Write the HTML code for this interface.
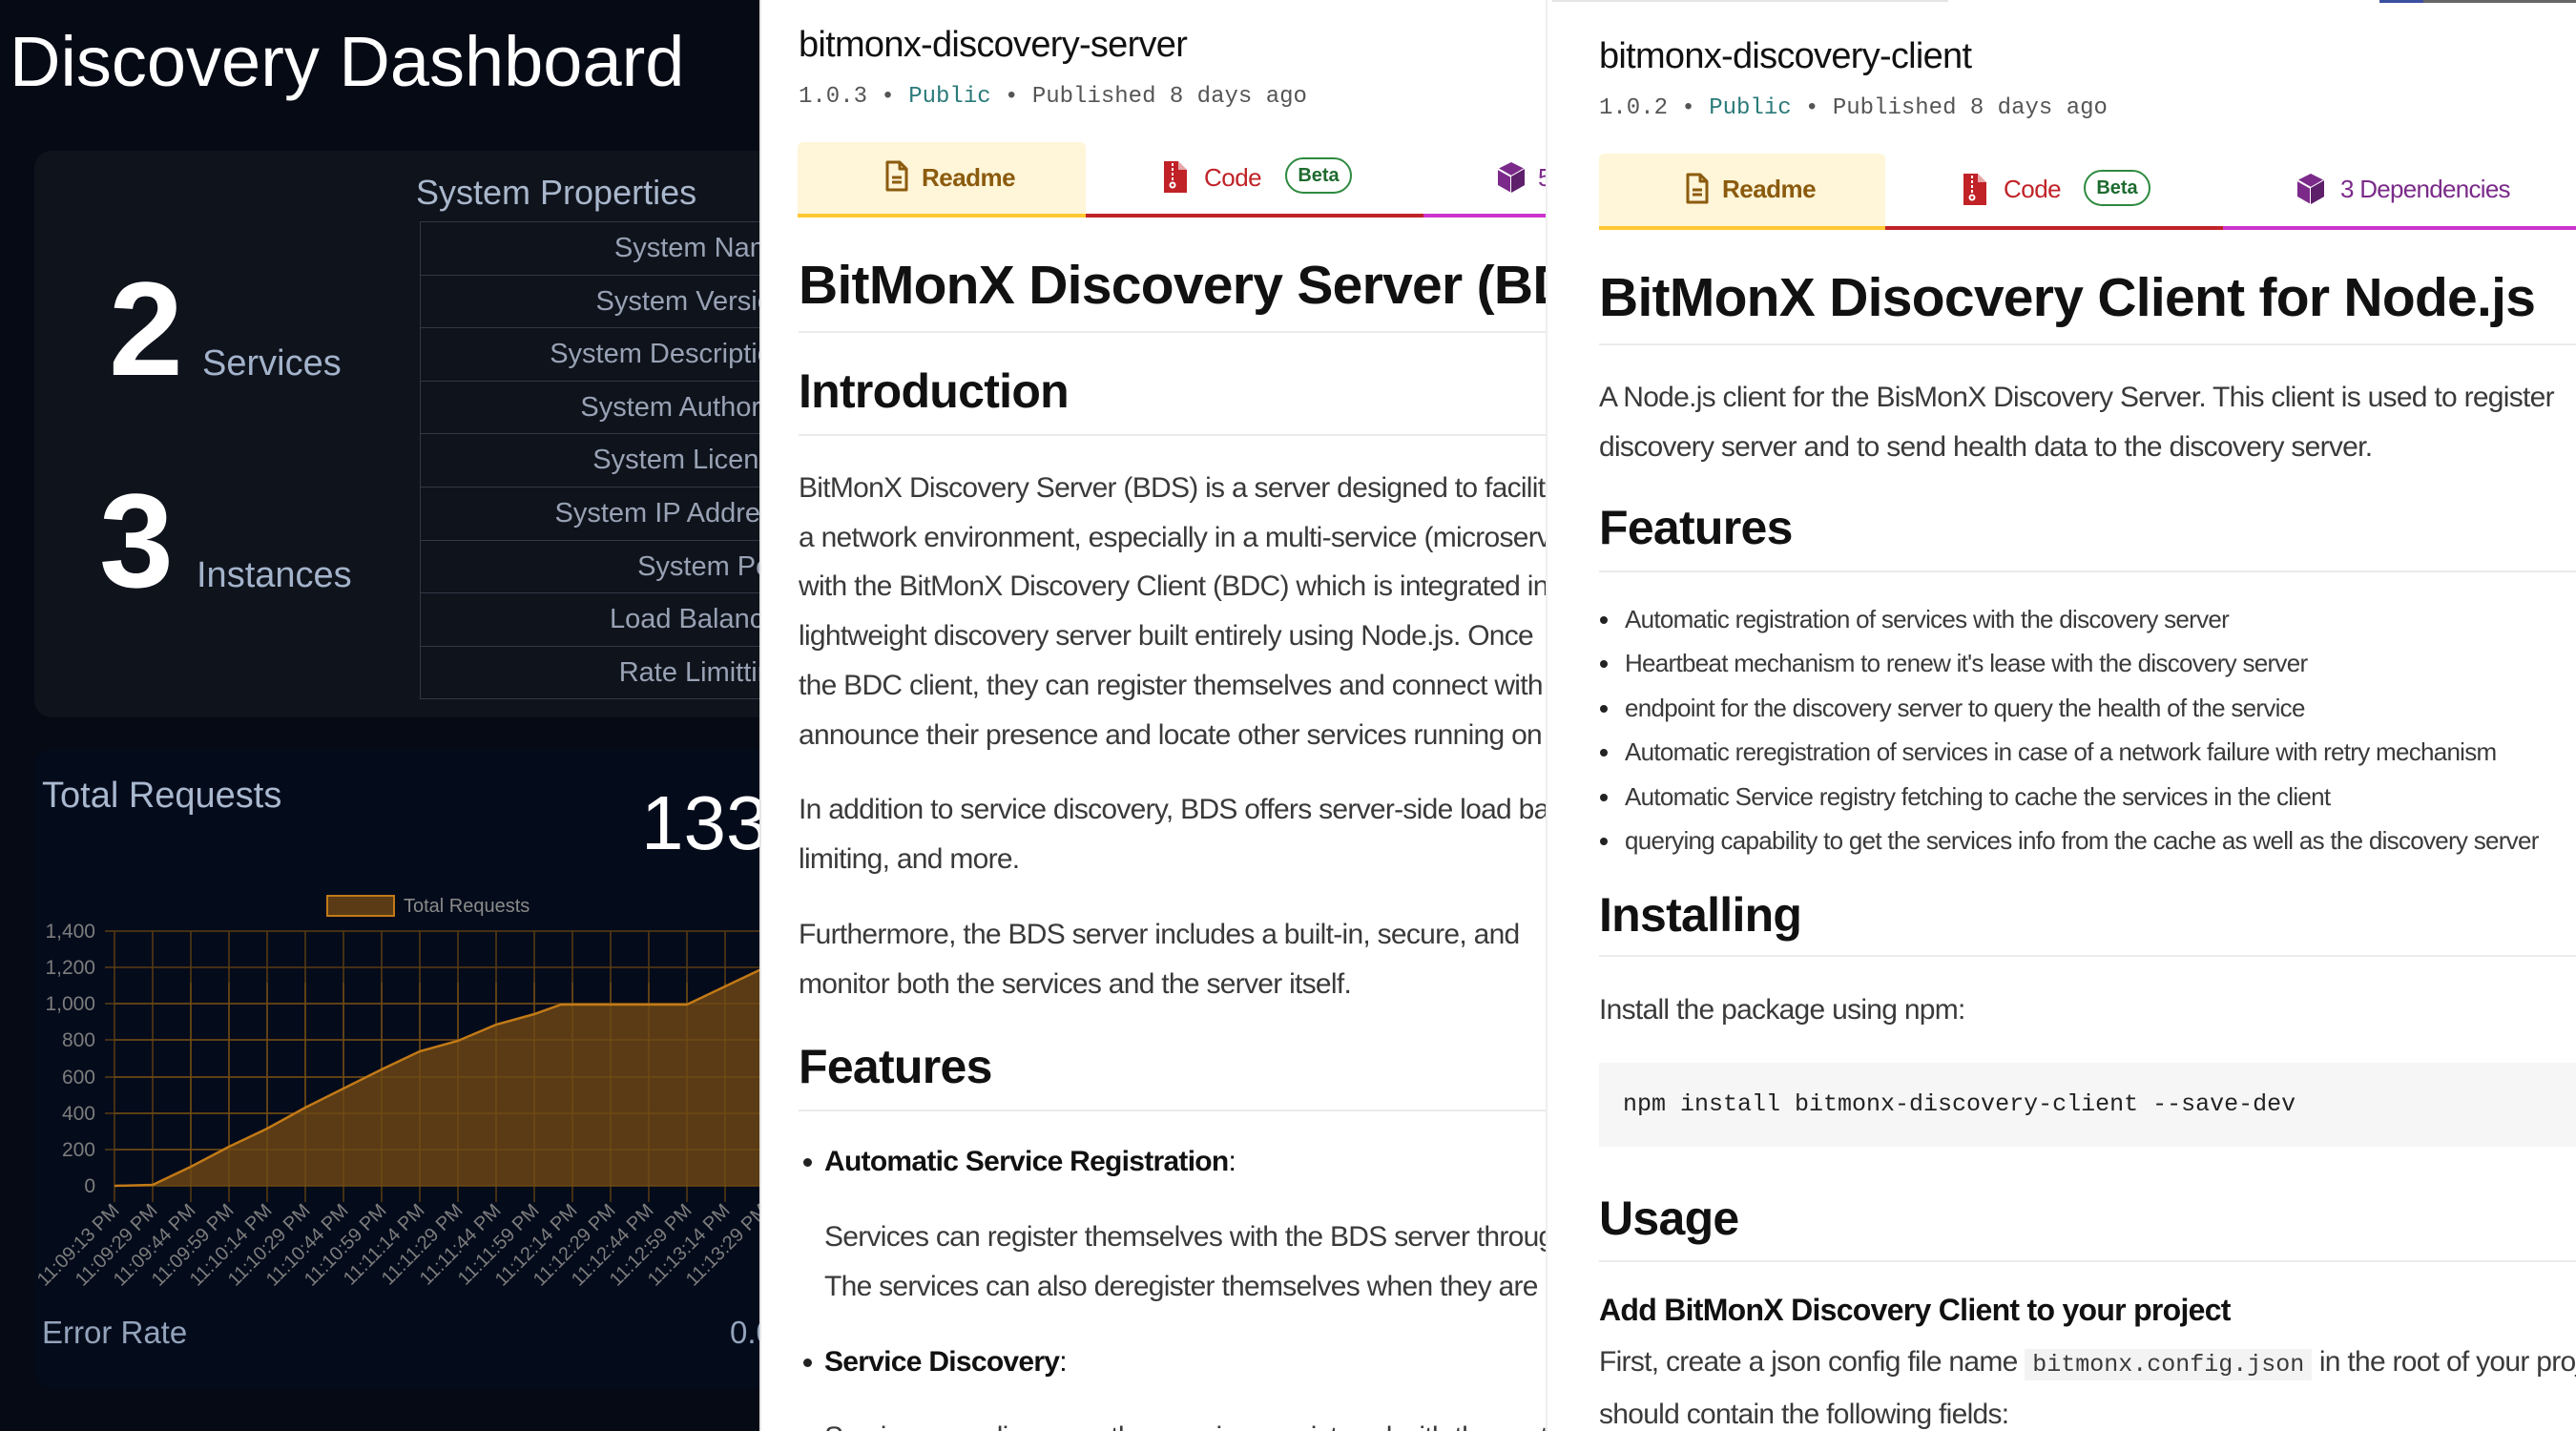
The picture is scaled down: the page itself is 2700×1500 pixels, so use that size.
<!DOCTYPE html>
<html><head><meta charset="utf-8"><style>
*{margin:0;padding:0;box-sizing:border-box}
body{width:2700px;height:1500px;position:relative;overflow:hidden;background:#fff;font-family:"Liberation Sans",sans-serif}
.p{position:absolute;top:0;height:1500px;overflow:hidden}
.a{position:absolute;white-space:nowrap}
.mono{font-family:"Liberation Mono",monospace}
.doc{font-family:"Liberation Sans",sans-serif;letter-spacing:-0.045em;color:#333}
.h1{font-size:57px;font-weight:bold;color:#111;line-height:57px}
.h2{font-size:50px;font-weight:bold;color:#111;line-height:50px}
.rule{position:absolute;height:2px;background:#ebebeb}
.para{font-size:30px;line-height:51.7px;color:#3a3a3a}
.row{position:absolute;left:440px;width:400px;height:56px;border-left:1px solid #333845;border-top:1px solid #333845;color:#98a2b4;font-size:29px;line-height:54px;text-align:right;padding-right:14px}
</style></head><body>

<!-- LEFT DASHBOARD -->
<div class="p" style="left:0;width:796px;background:#060a15">
  <div class="a" style="left:10px;top:28px;font-size:74px;line-height:74px;color:#fff">Discovery Dashboard</div>
  <div class="a" style="left:36px;top:158px;width:800px;height:594px;background:#0f131c;border-radius:18px"></div>
  <div class="a" style="left:436px;top:184px;font-size:36px;line-height:36px;color:#a9b7cc">System Properties</div>
  <div class="row" style="top:232px">System Name</div>
  <div class="row" style="top:288px">System Version</div>
  <div class="row" style="top:343px">System Description</div>
  <div class="row" style="top:399px">System Authority</div>
  <div class="row" style="top:454px">System License</div>
  <div class="row" style="top:510px">System IP Address</div>
  <div class="row" style="top:566px">System Port</div>
  <div class="row" style="top:621px">Load Balancer</div>
  <div class="row" style="top:677px;border-bottom:1px solid #333845">Rate Limitting</div>
  <div class="a" style="left:114px;top:275px;font-size:140px;line-height:140px;font-weight:bold;color:#fff">2</div>
  <div class="a" style="left:212px;top:362px;font-size:38px;line-height:38px;color:#a3b3cb">Services</div>
  <div class="a" style="left:104px;top:497px;font-size:140px;line-height:140px;font-weight:bold;color:#fff">3</div>
  <div class="a" style="left:206px;top:584px;font-size:38px;line-height:38px;color:#a3b3cb">Instances</div>

  <div class="a" style="left:36px;top:785px;width:800px;height:670px;background:#040b1b;border-radius:18px"></div>
  <div class="a" style="left:44px;top:815px;font-size:38px;line-height:38px;color:#a9b8cf">Total Requests</div>
  <div class="a" style="left:672px;top:823px;font-size:80px;line-height:80px;color:#fff">133</div>
  <div class="a" style="left:44px;top:1380px;font-size:33px;line-height:33px;color:#93a3bb">Error Rate</div>
  <div class="a" style="left:765px;top:1380px;font-size:33px;line-height:33px;color:#93a3bb">0.0</div>

  <svg class="a" style="left:0;top:0" width="796" height="1500" viewBox="0 0 796 1500">
    <rect x="343" y="939" width="70" height="21" fill="#5a3b15" stroke="#c27a17" stroke-width="2"/>
    <text x="423" y="956" font-size="20" fill="#8a8a8a" font-family="Liberation Sans">Total Requests</text>
    <g stroke="#5a3d12" stroke-width="1.5">
      <line x1="110" y1="976" x2="800" y2="976"/><line x1="110" y1="1014" x2="800" y2="1014"/>
      <line x1="110" y1="1052" x2="800" y2="1052"/><line x1="110" y1="1090" x2="800" y2="1090"/>
      <line x1="110" y1="1129" x2="800" y2="1129"/><line x1="110" y1="1167" x2="800" y2="1167"/>
      <line x1="110" y1="1205" x2="800" y2="1205"/>
      <g id="vl">
      <line x1="120" y1="976" x2="120" y2="1260"/><line x1="160" y1="976" x2="160" y2="1260"/>
      <line x1="200" y1="976" x2="200" y2="1260"/><line x1="240" y1="976" x2="240" y2="1260"/>
      <line x1="280" y1="976" x2="280" y2="1260"/><line x1="320" y1="976" x2="320" y2="1260"/>
      <line x1="360" y1="976" x2="360" y2="1260"/><line x1="400" y1="976" x2="400" y2="1260"/>
      <line x1="440" y1="976" x2="440" y2="1260"/><line x1="480" y1="976" x2="480" y2="1260"/>
      <line x1="520" y1="976" x2="520" y2="1260"/><line x1="560" y1="976" x2="560" y2="1260"/>
      <line x1="600" y1="976" x2="600" y2="1260"/><line x1="640" y1="976" x2="640" y2="1260"/>
      <line x1="680" y1="976" x2="680" y2="1260"/><line x1="720" y1="976" x2="720" y2="1260"/>
      <line x1="760" y1="976" x2="760" y2="1260"/>
      </g>
    </g>
    <path d="M120,1243 L160,1242 L200,1223 L240,1202 L280,1183 L320,1161 L360,1141 L400,1121 L440,1102 L480,1091 L520,1074 L560,1063 L588,1053 L720,1053 L760,1034 L800,1015 L800,1243 Z" fill="#5a3b15"/>
    <g stroke="#6e4a15" stroke-width="1.5">
      <line x1="120" y1="1243" x2="800" y2="1243"/>
      <line x1="120" y1="1205" x2="800" y2="1205"/><line x1="120" y1="1167" x2="800" y2="1167"/>
      <line x1="120" y1="1129" x2="800" y2="1129"/><line x1="120" y1="1090" x2="800" y2="1090"/>
      <line x1="120" y1="1052" x2="800" y2="1052"/>
      <line x1="200" y1="1030" x2="200" y2="1243"/><line x1="240" y1="1030" x2="240" y2="1243"/>
      <line x1="280" y1="1030" x2="280" y2="1243"/><line x1="320" y1="1030" x2="320" y2="1243"/>
      <line x1="360" y1="1030" x2="360" y2="1243"/><line x1="400" y1="1030" x2="400" y2="1243"/>
      <line x1="440" y1="1030" x2="440" y2="1243"/><line x1="480" y1="1030" x2="480" y2="1243"/>
      <line x1="520" y1="1030" x2="520" y2="1243"/><line x1="560" y1="1030" x2="560" y2="1243"/>
      <line x1="600" y1="1030" x2="600" y2="1243"/><line x1="640" y1="1030" x2="640" y2="1243"/>
      <line x1="680" y1="1030" x2="680" y2="1243"/><line x1="720" y1="1030" x2="720" y2="1243"/>
      <line x1="760" y1="1030" x2="760" y2="1243"/>
    </g>
    <path d="M120,1243 L160,1242 L200,1223 L240,1202 L280,1183 L320,1161 L360,1141 L400,1121 L440,1102 L480,1091 L520,1074 L560,1063 L588,1053 L720,1053 L760,1034 L800,1015" fill="none" stroke="#c27a17" stroke-width="2.5"/>
    <g font-family="Liberation Sans" font-size="21" fill="#7d7d7d" text-anchor="end">
      <text x="100" y="983">1,400</text><text x="100" y="1021">1,200</text><text x="100" y="1059">1,000</text>
      <text x="100" y="1097">800</text><text x="100" y="1136">600</text><text x="100" y="1174">400</text>
      <text x="100" y="1212">200</text><text x="100" y="1250">0</text>
    </g>
    <g font-family="Liberation Sans" font-size="20" fill="#7d7d7d" text-anchor="end">
      <text transform="translate(126,1270) rotate(-45)">11:09:13 PM</text>
      <text transform="translate(166,1270) rotate(-45)">11:09:29 PM</text>
      <text transform="translate(206,1270) rotate(-45)">11:09:44 PM</text>
      <text transform="translate(246,1270) rotate(-45)">11:09:59 PM</text>
      <text transform="translate(286,1270) rotate(-45)">11:10:14 PM</text>
      <text transform="translate(326,1270) rotate(-45)">11:10:29 PM</text>
      <text transform="translate(366,1270) rotate(-45)">11:10:44 PM</text>
      <text transform="translate(406,1270) rotate(-45)">11:10:59 PM</text>
      <text transform="translate(446,1270) rotate(-45)">11:11:14 PM</text>
      <text transform="translate(486,1270) rotate(-45)">11:11:29 PM</text>
      <text transform="translate(526,1270) rotate(-45)">11:11:44 PM</text>
      <text transform="translate(566,1270) rotate(-45)">11:11:59 PM</text>
      <text transform="translate(606,1270) rotate(-45)">11:12:14 PM</text>
      <text transform="translate(646,1270) rotate(-45)">11:12:29 PM</text>
      <text transform="translate(686,1270) rotate(-45)">11:12:44 PM</text>
      <text transform="translate(726,1270) rotate(-45)">11:12:59 PM</text>
      <text transform="translate(766,1270) rotate(-45)">11:13:14 PM</text>
      <text transform="translate(806,1270) rotate(-45)">11:13:29 PM</text>
    </g>
  </svg>
</div>

<!-- MIDDLE: server -->
<div class="p doc" style="left:796px;width:826px;background:#fff;border-left:2px solid #e6e6e6;border-right:2px solid #eee">
  <div class="a" style="left:39px;top:28px;font-size:38px;line-height:38px;color:#111">bitmonx-discovery-server</div>
  <div class="a mono" style="left:39px;top:90px;font-size:24px;line-height:24px;letter-spacing:0;color:#555">1.0.3 • <span style="color:#2b7a7a">Public</span> • Published 8 days ago</div>
  <div class="a" style="left:38px;top:149px;width:302px;height:75px;background:#fff5d8;border-radius:6px 6px 0 0"></div>
  <div class="a" style="left:38px;top:224px;width:302px;height:4px;background:#ffc832"></div>
  <div class="a" style="left:340px;top:224px;width:354px;height:4px;background:#c02227"></div>
  <div class="a" style="left:694px;top:224px;width:140px;height:4px;background:#cc33cc"></div>
  <svg class="a" style="left:129px;top:168px" width="26" height="34" viewBox="0 0 26 34"><path d="M3 2h13l7 7v22H3z M16 2v7h7" fill="none" stroke="#8b5b0e" stroke-width="3" stroke-linejoin="round"/><path d="M8 18h10M8 23h10" stroke="#8b5b0e" stroke-width="3"/></svg>
  <div class="a" style="left:168px;top:173px;font-size:26px;line-height:26px;color:#8b5b0e;font-weight:bold;letter-spacing:-0.02em">Readme</div>
  <svg class="a" style="left:421px;top:168px" width="26" height="34" viewBox="0 0 26 34"><path d="M1 1h15l9 9v24H1z" fill="#c02227"/><path d="M16 1v9h9" fill="#fff" opacity=".6"/><path d="M10 3v3M10 8v3M10 13v3M10 18v3" stroke="#fff" stroke-width="2"/><circle cx="10" cy="26" r="2.5" fill="none" stroke="#fff" stroke-width="2"/></svg>
  <div class="a" style="left:464px;top:173px;font-size:26px;line-height:26px;color:#c02227;letter-spacing:-0.02em">Code</div>
  <div class="a" style="left:549px;top:165px;width:70px;height:38px;border:2px solid #2d8a3f;border-radius:19px;color:#1f6b2f;font-size:20px;line-height:34px;text-align:center;font-weight:bold;letter-spacing:0">Beta</div>
  <svg class="a" style="left:770px;top:169px" width="32" height="34" viewBox="0 0 32 34"><path d="M16 1l14 7v17l-14 8-14-8V8z" fill="#7b2a8a"/><path d="M2 8l14 8 14-8M16 16v17" stroke="#fff" stroke-width="2" fill="none"/><path d="M16 16l14-8v17l-14 8z" fill="#5e1f6b"/></svg>
  <div class="a" style="left:814px;top:173px;font-size:26px;line-height:26px;color:#7b2a8a">5</div>

  <div class="a h1" style="left:39px;top:271px">BitMonX Discovery Server (BDS)</div>
  <div class="rule" style="left:39px;top:347px;width:792px"></div>
  <div class="a h2" style="left:39px;top:385px">Introduction</div>
  <div class="rule" style="left:39px;top:455px;width:792px"></div>
  <div class="a para" style="left:39px;top:486px">BitMonX Discovery Server (BDS) is a server designed to facilitate<br>a network environment, especially in a multi-service (microservice)<br>with the BitMonX Discovery Client (BDC) which is integrated into a<br>lightweight discovery server built entirely using Node.js. Once<br>the BDC client, they can register themselves and connect with<br>announce their presence and locate other services running on</div>
  <div class="a para" style="left:39px;top:823px">In addition to service discovery, BDS offers server-side load balancing,<br>limiting, and more.</div>
  <div class="a para" style="left:39px;top:954px">Furthermore, the BDS server includes a built-in, secure, and<br>monitor both the services and the server itself.</div>
  <div class="a h2" style="left:39px;top:1093px">Features</div>
  <div class="rule" style="left:39px;top:1163px;width:792px"></div>
  <div class="a" style="left:44px;top:1214px;width:9px;height:9px;border-radius:50%;background:#222"></div>
  <div class="a para" style="left:66px;top:1192px;color:#111"><b>Automatic Service Registration</b>:</div>
  <div class="a para" style="left:66px;top:1271px">Services can register themselves with the BDS server through<br>The services can also deregister themselves when they are</div>
  <div class="a" style="left:44px;top:1424px;width:9px;height:9px;border-radius:50%;background:#222"></div>
  <div class="a para" style="left:66px;top:1402px;color:#111"><b>Service Discovery</b>:</div>
  <div class="a para" style="left:66px;top:1481px">Services can discover other services registered with the system</div>
</div>

<!-- RIGHT: client -->
<div class="p doc" style="left:1627px;width:1073px;background:#fff">
  <div class="a" style="left:0;top:0;width:415px;height:2px;background:#e4e4e4"></div>
  <div class="a" style="left:867px;top:0;width:46px;height:3px;background:#3b4fa0"></div>
  <div class="a" style="left:913px;top:0;width:160px;height:3px;background:#666"></div>
  <div class="a" style="left:49px;top:40px;font-size:38px;line-height:38px;color:#111">bitmonx-discovery-client</div>
  <div class="a mono" style="left:49px;top:102px;font-size:24px;line-height:24px;letter-spacing:0;color:#555">1.0.2 • <span style="color:#2b7a7a">Public</span> • Published 8 days ago</div>
  <div class="a" style="left:49px;top:161px;width:300px;height:76px;background:#fff5d8;border-radius:6px 6px 0 0"></div>
  <div class="a" style="left:49px;top:237px;width:300px;height:4px;background:#ffc832"></div>
  <div class="a" style="left:349px;top:237px;width:354px;height:4px;background:#c02227"></div>
  <div class="a" style="left:703px;top:237px;width:370px;height:4px;background:#cc33cc"></div>
  <svg class="a" style="left:139px;top:181px" width="26" height="34" viewBox="0 0 26 34"><path d="M3 2h13l7 7v22H3z M16 2v7h7" fill="none" stroke="#8b5b0e" stroke-width="3" stroke-linejoin="round"/><path d="M8 18h10M8 23h10" stroke="#8b5b0e" stroke-width="3"/></svg>
  <div class="a" style="left:178px;top:185px;font-size:26px;line-height:26px;color:#8b5b0e;font-weight:bold;letter-spacing:-0.02em">Readme</div>
  <svg class="a" style="left:430px;top:181px" width="26" height="34" viewBox="0 0 26 34"><path d="M1 1h15l9 9v24H1z" fill="#c02227"/><path d="M16 1v9h9" fill="#fff" opacity=".6"/><path d="M10 3v3M10 8v3M10 13v3M10 18v3" stroke="#fff" stroke-width="2"/><circle cx="10" cy="26" r="2.5" fill="none" stroke="#fff" stroke-width="2"/></svg>
  <div class="a" style="left:473px;top:185px;font-size:26px;line-height:26px;color:#c02227;letter-spacing:-0.02em">Code</div>
  <div class="a" style="left:557px;top:178px;width:70px;height:38px;border:2px solid #2d8a3f;border-radius:19px;color:#1f6b2f;font-size:20px;line-height:34px;text-align:center;font-weight:bold;letter-spacing:0">Beta</div>
  <svg class="a" style="left:779px;top:181px" width="32" height="34" viewBox="0 0 32 34"><path d="M16 1l14 7v17l-14 8-14-8V8z" fill="#7b2a8a"/><path d="M2 8l14 8 14-8M16 16v17" stroke="#fff" stroke-width="2" fill="none"/><path d="M16 16l14-8v17l-14 8z" fill="#5e1f6b"/></svg>
  <div class="a" style="left:826px;top:185px;font-size:26px;line-height:26px;color:#7b2a8a">3 Dependencies</div>

  <div class="a h1" style="left:49px;top:284px">BitMonX Disocvery Client for Node.js</div>
  <div class="rule" style="left:49px;top:360px;width:1030px"></div>
  <div class="a para" style="left:49px;top:391px">A Node.js client for the BisMonX Discovery Server. This client is used to register<br>discovery server and to send health data to the discovery server.</div>
  <div class="a h2" style="left:49px;top:528px">Features</div>
  <div class="rule" style="left:49px;top:598px;width:1030px"></div>
  <div class="a" style="left:50px;top:646px;width:8px;height:8px;border-radius:50%;background:#222"></div>
  <div class="a" style="left:50px;top:692px;width:8px;height:8px;border-radius:50%;background:#222"></div>
  <div class="a" style="left:50px;top:739px;width:8px;height:8px;border-radius:50%;background:#222"></div>
  <div class="a" style="left:50px;top:785px;width:8px;height:8px;border-radius:50%;background:#222"></div>
  <div class="a" style="left:50px;top:832px;width:8px;height:8px;border-radius:50%;background:#222"></div>
  <div class="a" style="left:50px;top:878px;width:8px;height:8px;border-radius:50%;background:#222"></div>
  <div class="a" style="left:76px;top:626px;font-size:26px;line-height:46.4px;color:#3a3a3a">Automatic registration of services with the discovery server<br>Heartbeat mechanism to renew it's lease with the discovery server<br>endpoint for the discovery server to query the health of the service<br>Automatic reregistration of services in case of a network failure with retry mechanism<br>Automatic Service registry fetching to cache the services in the client<br>querying capability to get the services info from the cache as well as the discovery server</div>
  <div class="a h2" style="left:49px;top:934px">Installing</div>
  <div class="rule" style="left:49px;top:1001px;width:1030px"></div>
  <div class="a para" style="left:49px;top:1033px">Install the package using npm:</div>
  <div class="a" style="left:49px;top:1114px;width:1030px;height:88px;background:#f6f6f6"></div>
  <div class="a mono" style="left:74px;top:1145px;font-size:25px;line-height:25px;letter-spacing:0;color:#222">npm install bitmonx-discovery-client --save-dev</div>
  <div class="a h2" style="left:49px;top:1252px">Usage</div>
  <div class="rule" style="left:49px;top:1321px;width:1030px"></div>
  <div class="a" style="left:49px;top:1357px;font-size:32px;line-height:32px;font-weight:bold;color:#111">Add BitMonX Discovery Client to your project</div>
  <div class="a para" style="left:49px;top:1402px">First, create a json config file name <span class="mono" style="background:#f3f3f3;padding:2px 8px;font-size:25px;letter-spacing:0">bitmonx.config.json</span> in the root of your project<br>should contain the following fields:</div>
</div>
</body></html>
